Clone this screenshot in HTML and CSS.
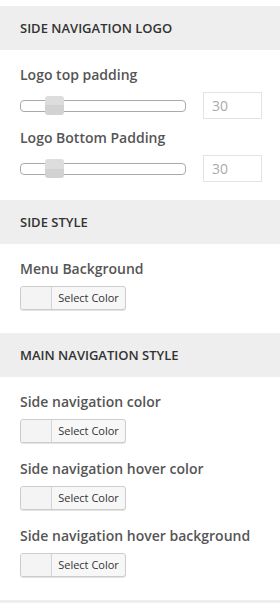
FILE: index.html
```html
<!DOCTYPE html>
<html lang="en">

<head>
    <meta charset="UTF-8">
    <title>Side navigation options</title>
    <link rel="stylesheet" href="styles.css">
</head>

<body>
    <div id="options">
        <h3 class="section_title">Side Navigation Logo</h3>
        <div class="section_body sliders">
            <div class="field slider_field">
                <label>Logo top padding</label>
                <div class="slider_row">
                    <div class="track"><span class="handle"></span></div>
                    <input class="num" type="text" value="30">
                </div>
            </div>
            <div class="field slider_field">
                <label>Logo Bottom Padding</label>
                <div class="slider_row">
                    <div class="track"><span class="handle"></span></div>
                    <input class="num" type="text" value="30">
                </div>
            </div>
        </div>

        <h3 class="section_title">Side Style</h3>
        <div class="section_body">
            <div class="field">
                <label>Menu Background</label>
                <button class="color_btn"><span class="swatch"></span><span class="btn_text">Select Color</span></button>
            </div>
        </div>

        <h3 class="section_title">Main Navigation Style</h3>
        <div class="section_body">
            <div class="field">
                <label>Side navigation color</label>
                <button class="color_btn"><span class="swatch"></span><span class="btn_text">Select Color</span></button>
            </div>
            <div class="field">
                <label>Side navigation hover color</label>
                <button class="color_btn"><span class="swatch"></span><span class="btn_text">Select Color</span></button>
            </div>
            <div class="field">
                <label>Side navigation hover background</label>
                <button class="color_btn"><span class="swatch"></span><span class="btn_text">Select Color</span></button>
            </div>
        </div>
        <div class="section_title empty"></div>
    </div>
</body>

</html>
```

FILE: styles.css
```css
* {
    margin: 0;
    padding: 0;
    box-sizing: border-box;
}

body {
    background: #fff;
    font-family: "Open Sans", "Liberation Sans", sans-serif;
    color: #555;
}

#options {
    padding-top: 6px;
}

.section_title {
    height: 44px;
    line-height: 44px;
    padding: 0 20px;
    background-color: #eeeeee;
    font-size: 13px;
    font-weight: 600;
    text-transform: uppercase;
    color: #333;
}

.section_body {
    padding: 15px 20px 23px;
}

.section_body.sliders {
    padding-bottom: 18px;
}

.field {
    display: flex;
    flex-direction: column;
    align-items: flex-start;
    gap: 7px;
    margin-bottom: 16px;
}

.field:last-child {
    margin-bottom: 0;
}

.slider_field {
    margin-bottom: 9px;
}

.field label {
    display: block;
    height: 20px;
    line-height: 20px;
    font-size: 14px;
    font-weight: 600;
    color: #555;
}

.slider_row {
    display: flex;
    align-items: center;
    gap: 17px;
    height: 27px;
}

.track {
    position: relative;
    width: 166px;
    height: 12px;
    border: 1px solid #aaa;
    border-radius: 4px;
    background: #fff;
}

.handle {
    position: absolute;
    left: 24px;
    top: -5px;
    width: 19px;
    height: 19px;
    border-radius: 3px;
    background: linear-gradient(#dddddd 0, #dddddd 50%, #d2d2d2 50%, #d2d2d2 100%);
}

.num {
    width: 59px;
    height: 27px;
    padding-left: 8px;
    border: 1px solid #e3e3e3;
    font-family: "Open Sans", "Liberation Sans", sans-serif;
    font-size: 14px;
    color: #aaa;
    outline: none;
}

.color_btn {
    display: flex;
    width: 106px;
    height: 24px;
    border: 1px solid #cccccc;
    border-radius: 3px;
    background: #f7f7f7;
    overflow: hidden;
    box-shadow: 0 1px 0 #e4e4e4;
    font-family: "Open Sans", "Liberation Sans", sans-serif;
}

.swatch {
    width: 31px;
    height: 100%;
    border-right: 1px solid #d4d4d4;
    background: #f4f4f4;
}

.btn_text {
    flex: 1;
    line-height: 22px;
    font-size: 11px;
    color: #333;
    text-align: center;
}

.empty {
    height: 10px;
}
```
